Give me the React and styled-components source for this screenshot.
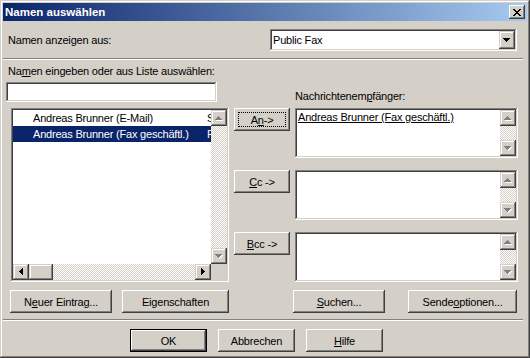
import React from 'react';
import styled, { createGlobalStyle, css } from 'styled-components';

const FACE = '#D4D0C8';
const SHADOW = '#808080';
const DARK = '#404040';
const HI = '#FFFFFF';
const SEL = '#0A246A';

const GlobalStyle = createGlobalStyle`
  html, body { margin: 0; padding: 0; background: ${FACE}; }
  body { font-family: "Liberation Sans", Arial, sans-serif; font-size: 11px; letter-spacing: -0.2px; color: #000; }
  * { box-sizing: border-box; }
  u { text-decoration-thickness: 1px; text-underline-offset: 1px; }
`;

const buttonEdge = css`
  background: ${FACE};
  box-shadow: inset -1px -1px ${DARK}, inset 1px 1px ${HI}, inset -2px -2px ${SHADOW}, inset 2px 2px ${FACE};
`;
const scrollEdge = css`
  background: ${FACE};
  box-shadow: inset -1px -1px ${DARK}, inset 1px 1px ${FACE}, inset -2px -2px ${SHADOW}, inset 2px 2px ${HI};
`;
const sunken = css`
  box-shadow: inset -1px -1px ${HI}, inset 1px 1px ${SHADOW}, inset -2px -2px ${FACE}, inset 2px 2px ${DARK};
`;
const checker = css`
  background-color: ${FACE};
  background-image: conic-gradient(${HI} 25%, ${FACE} 0 50%, ${HI} 0 75%, ${FACE} 0);
  background-size: 2px 2px;
`;

const PATTERNS = {
  up: ['...#...', '..###..', '.#####.', '#######'],
  down: ['#######', '.#####.', '..###..', '...#...'],
  left: ['...#', '..##', '.###', '####', '.###', '..##', '...#'],
  right: ['#...', '##..', '###.', '####', '###.', '##..', '#...'],
  close: ['##....##', '.##..##.', '..####..', '...##...', '..####..', '.##..##.', '##....##'],
};

function Glyph({ name, disabled }) {
  const rows = PATTERNS[name];
  const w = rows[0].length;
  const h = rows.length;
  let d = '';
  rows.forEach((r, y) => {
    [...r].forEach((c, x) => {
      if (c === '#') d += `M${x} ${y}h1v1h-1z`;
    });
  });
  return (
    <svg width={w + 1} height={h + 1} viewBox={`0 0 ${w + 1} ${h + 1}`} shapeRendering="crispEdges">
      {disabled && <path d={d} fill={HI} transform="translate(1,1)" />}
      <path d={d} fill={disabled ? SHADOW : '#000'} />
    </svg>
  );
}

const Window = styled.div`
  width: 530px;
  height: 358px;
  padding: 3px;
  background: ${FACE};
  box-shadow: inset -1px -1px ${DARK}, inset 1px 1px ${FACE}, inset -2px -2px ${SHADOW}, inset 2px 2px ${HI};
  display: flex;
  flex-direction: column;
`;

const TitleBar = styled.div`
  height: 18px;
  flex: none;
  display: flex;
  align-items: center;
  padding: 0 2px 0 2px;
  background: linear-gradient(to right, ${SEL}, #A6CAF0);
`;

const Title = styled.span`
  color: #fff;
  font-weight: bold;
  font-size: 11.5px;
  letter-spacing: 0;
  line-height: 14px;
`;

const CaptionButton = styled.div`
  ${buttonEdge};
  margin-left: auto;
  width: 16px;
  height: 14px;
  display: flex;
  align-items: center;
  justify-content: center;
  padding: 1px 0 0 1px;
`;

const Client = styled.div`
  flex: 1;
  display: flex;
  flex-direction: column;
`;

const TopRow = styled.div`
  display: flex;
  align-items: center;
  padding: 8px 10px 0 5px;
`;

const Label = styled.div`
  line-height: 13px;
  white-space: nowrap;
  margin-left: ${p => p.$ml || 0}px;
  margin-top: ${p => p.$mt || 0}px;
  margin-bottom: ${p => p.$mb || 0}px;
`;

const Combo = styled.div`
  ${sunken};
  background: #fff;
  margin-left: auto;
  width: 247px;
  height: 22px;
  padding: 2px;
  display: flex;
  align-items: center;
`;

const ComboText = styled.span`
  flex: 1;
  padding-left: 1px;
`;

const ScrollButton = styled.div`
  ${scrollEdge};
  width: 16px;
  height: ${p => p.$h || 16}px;
  flex: none;
  display: flex;
  align-items: center;
  justify-content: center;
`;

const Separator = styled.div`
  width: 520px;
  height: 2px;
  margin-top: ${p => p.$mt}px;
  border-top: 1px solid ${SHADOW};
  border-bottom: 1px solid ${HI};
`;

const Main = styled.div`
  display: grid;
  grid-template-columns: 223px 56px 223px;
  column-gap: 5px;
  padding-left: 3px;
`;

const Column = styled.div`
  display: flex;
  flex-direction: column;
  padding-top: ${p => p.$pt || 0}px;
  gap: ${p => p.$gap || 0}px;
`;

const TextInput = styled.div`
  ${sunken};
  background: #fff;
  width: 211px;
  height: 20px;
  margin-top: 4px;
`;

const ListBox = styled.div`
  ${sunken};
  background: #fff;
  padding: 2px;
  width: ${p => p.$w}px;
  height: ${p => p.$h}px;
  margin-left: ${p => p.$ml || 0}px;
  margin-top: ${p => p.$mt || 0}px;
  display: grid;
  grid-template-columns: 1fr 16px;
  grid-template-rows: ${p => (p.$hscroll ? '1fr 16px' : '1fr')};
  flex: none;
`;

const ListArea = styled.div`
  overflow: hidden;
  min-width: 0;
`;

const Row = styled.div`
  height: 16px;
  display: flex;
  align-items: center;
  white-space: nowrap;
  background: ${p => (p.$selected ? SEL : 'transparent')};
  color: ${p => (p.$selected ? '#fff' : '#000')};
`;

const NameCell = styled.span`
  width: 194px;
  flex: none;
  padding-left: 20px;
  overflow: hidden;
`;

const TypeCell = styled.span`
  flex: none;
`;

const Recipient = styled.div`
  line-height: 14px;
  padding-left: 1px;
  text-decoration: underline;
  text-decoration-thickness: 1px;
  text-underline-offset: 1px;
  white-space: nowrap;
`;

const VScroll = styled.div`
  display: flex;
  flex-direction: column;
  ${checker};
`;

const Track = styled.div`
  flex: 1;
  ${checker};
`;

const HScroll = styled.div`
  display: flex;
  ${checker};
`;

const Thumb = styled.div`
  ${scrollEdge};
  width: 24px;
  height: 16px;
`;

const Corner = styled.div`
  background: ${FACE};
`;

const Button = styled.div`
  ${buttonEdge};
  position: relative;
  width: ${p => p.$w}px;
  height: 23px;
  flex: none;
  display: flex;
  align-items: center;
  justify-content: center;
  white-space: nowrap;
  margin-left: ${p => p.$ml || 0}px;
  ${p =>
    p.$default &&
    css`
      box-shadow: inset 0 0 0 1px #000, inset -2px -2px ${DARK}, inset 2px 2px ${HI}, inset -3px -3px ${SHADOW},
        inset 3px 3px ${FACE};
    `}
  ${p =>
    p.$focus &&
    css`
      &::after {
        content: '';
        position: absolute;
        inset: 4px;
        border: 1px dotted #000;
      }
    `}
`;

const ButtonRow = styled.div`
  display: flex;
  margin-top: 8px;
  padding-left: ${p => p.$pl}px;
  gap: ${p => p.$gap || 0}px;
`;

function RecipientList({ children }) {
  return (
    <ListBox $w={223} $h={50}>
      <ListArea>{children}</ListArea>
      <VScroll>
        <ScrollButton><Glyph name="up" disabled /></ScrollButton>
        <Track />
        <ScrollButton><Glyph name="down" disabled /></ScrollButton>
      </VScroll>
    </ListBox>
  );
}

export default function App() {
  return (
    <>
      <GlobalStyle />
      <Window>
        <TitleBar>
          <Title>Namen auswählen</Title>
          <CaptionButton><Glyph name="close" /></CaptionButton>
        </TitleBar>
        <Client>
          <TopRow>
            <Label>Namen anzei<u>g</u>en aus:</Label>
            <Combo>
              <ComboText>Public Fax</ComboText>
              <ScrollButton $h={18}><Glyph name="down" /></ScrollButton>
            </Combo>
          </TopRow>
          <Separator $mt={7} />
          <Main>
            <Column $pt={5}>
              <Label $ml={2}>Na<u>m</u>en eingeben oder aus Liste auswählen:</Label>
              <TextInput />
              <ListBox $w={218} $h={174} $ml={5} $mt={6} $hscroll>
                <ListArea>
                  <Row>
                    <NameCell>Andreas Brunner (E-Mail)</NameCell>
                    <TypeCell>SMTP</TypeCell>
                  </Row>
                  <Row $selected>
                    <NameCell>Andreas Brunner (Fax geschäftl.)</NameCell>
                    <TypeCell>FAX</TypeCell>
                  </Row>
                </ListArea>
                <VScroll>
                  <ScrollButton><Glyph name="up" disabled /></ScrollButton>
                  <Track />
                  <ScrollButton><Glyph name="down" disabled /></ScrollButton>
                </VScroll>
                <HScroll>
                  <ScrollButton><Glyph name="left" /></ScrollButton>
                  <Thumb />
                  <Track />
                  <ScrollButton><Glyph name="right" /></ScrollButton>
                </HScroll>
                <Corner />
              </ListBox>
            </Column>
            <Column $pt={48} $gap={39}>
              <Button $w={56} $focus>A<u>n</u> -&gt;</Button>
              <Button $w={56}><u>C</u>c -&gt;</Button>
              <Button $w={56}><u>B</u>cc -&gt;</Button>
            </Column>
            <Column $pt={30} $gap={12}>
              <Label $mb={-7}>Nachrichtenem<u>p</u>fänger:</Label>
              <RecipientList>
                <Recipient>Andreas Brunner (Fax geschäftl.)</Recipient>
              </RecipientList>
              <RecipientList />
              <RecipientList />
            </Column>
          </Main>
          <ButtonRow $pl={7}>
            <Button $w={102}>N<u>e</u>uer Eintrag...</Button>
            <Button $w={107} $ml={10}>Ei<u>g</u>enschaften</Button>
            <Button $w={92} $ml={64}><u>S</u>uchen...</Button>
            <Button $w={109} $ml={23}>Sende<u>o</u>ptionen...</Button>
          </ButtonRow>
          <Separator $mt={6} />
          <ButtonRow $pl={127} $gap={11}>
            <Button $w={77} $default>OK</Button>
            <Button $w={77}>Abbrechen</Button>
            <Button $w={77}><u>H</u>ilfe</Button>
          </ButtonRow>
        </Client>
      </Window>
    </>
  );
}
